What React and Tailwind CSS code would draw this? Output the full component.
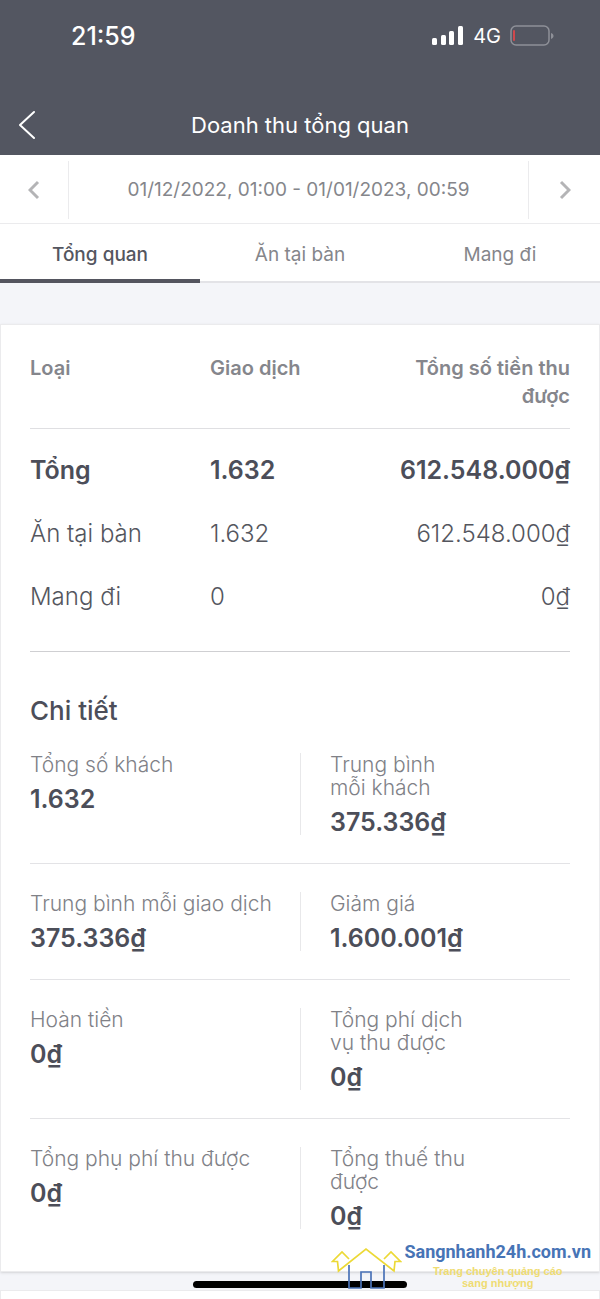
import { useState } from "react";

const tabs = ["Tổng quan", "Ăn tại bàn", "Mang đi"];

const rows = [
	{ type: "Tổng", count: "1.632", amount: "612.548.000₫", total: true },
	{ type: "Ăn tại bàn", count: "1.632", amount: "612.548.000₫" },
	{ type: "Mang đi", count: "0", amount: "0₫" },
];

const details = [
	[
		{ label: "Tổng số khách", value: "1.632" },
		{ label: "Trung bình mỗi khách", value: "375.336₫" },
	],
	[
		{ label: "Trung bình mỗi giao dịch", value: "375.336₫" },
		{ label: "Giảm giá", value: "1.600.001₫" },
	],
	[
		{ label: "Hoàn tiền", value: "0₫" },
		{ label: "Tổng phí dịch vụ thu được", value: "0₫" },
	],
	[
		{ label: "Tổng phụ phí thu được", value: "0₫" },
		{ label: "Tổng thuế thu được", value: "0₫" },
	],
];

function StatusBar() {
	return (
		<div className="flex h-[72px] items-center justify-between pl-[71px] pr-[46px] text-white">
			<span className="pt-[2px] text-[25px] font-medium">21:59</span>
			<div className="flex items-center gap-[9px]">
				<svg width="32" height="20" viewBox="0 0 32 20" fill="currentColor">
					<rect x="0" y="12" width="5" height="7" rx="1.5" />
					<rect x="9" y="9" width="5" height="10" rx="1.5" />
					<rect x="17" y="5" width="5" height="14" rx="1.5" />
					<rect x="26" y="0" width="5" height="19" rx="1.5" />
				</svg>
				<span className="text-[20px]">4G</span>
				<svg width="44" height="22" viewBox="0 0 44 22" fill="none">
					<rect x="1" y="1" width="38" height="19" rx="5" stroke="#8e9098" strokeWidth="1.5" />
					<path d="M41 8v6c1.500-.4 2.500-1.600 2.500-3s-1-2.600-2.500-3z" fill="#8e9098" />
					<rect x="3" y="5" width="2" height="11" rx="1" fill="#d0484c" />
				</svg>
			</div>
		</div>
	);
}

function DetailItem({ label, value, right }) {
	return (
		<div className={right ? "border-l border-[#e8e8ea] pl-[29px]" : ""}>
			<dt
				className={
					right
						? "max-w-[140px] text-[21px] leading-[23px] font-light text-[#808187]"
						: "whitespace-nowrap text-[21px] leading-[23px] font-light text-[#808187]"
				}
			>
				{label}
			</dt>
			<dd className="mt-[10px] text-[25px] leading-[26px] font-semibold text-[#4c4e59]">
				{value}
			</dd>
		</div>
	);
}

function Watermark() {
	return (
		<div className="absolute right-[9px] bottom-[10px] flex items-end gap-[2px]">
			<svg width="71" height="42" viewBox="0 0 71 42" fill="none" strokeWidth="1.7">
				<path
					d="M18 12l-7-7L1.500 14.500H6.500L7.500 24 35 2l28 22 1-9.500h5.500L60 5l-7 7"
					stroke="#ecd936"
				/>
				<path d="M18 18v23h12V25h10v16h13V18" stroke="#4a73b8" />
			</svg>
			<div className="flex flex-col items-center">
				<a
					href="#"
					className="font-['Roboto','Liberation_Sans',sans-serif] text-[18px] leading-[26px] font-bold text-[#4774b6]"
				>
					Sangnhanh24h.com.vn
				</a>
				<p className="text-center font-['Liberation_Sans',sans-serif] text-[11px] leading-[12px] font-bold text-[#efdc72]">
					Trang chuyên quảng cáo
					<br />
					sang nhượng
				</p>
			</div>
		</div>
	);
}

export default function App() {
	const [activeTab, setActiveTab] = useState(0);

	return (
		<div className="relative flex min-h-screen flex-col bg-[#f4f5f9] font-['Inter','Liberation_Sans',sans-serif]">
			{/* Header */}
			<header className="bg-[#535661] pb-[5px]">
				<StatusBar />
				<div className="grid grid-cols-[60px_1fr_60px] items-center pt-[28px]">
					<button type="button" aria-label="Quay lại" className="flex h-[50px] items-center pl-[19px] text-white">
						<svg width="18" height="30" viewBox="0 0 18 30" fill="none" stroke="currentColor" strokeWidth="2">
							<path d="M15 2L1 15l14 13" strokeLinecap="round" strokeLinejoin="round" />
						</svg>
					</button>
					<h1 className="text-center text-[22px] text-white">Doanh thu tổng quan</h1>
				</div>
			</header>

			{/* Date range */}
			<div className="flex h-[69px] items-stretch border-b border-[#ebebed] bg-white pt-[6px] pb-[4px]">
				<button
					type="button"
					aria-label="Trước"
					className="flex w-[69px] items-center justify-center border-r border-[#ebebed] text-[#b4b4b6]"
				>
					<svg width="12" height="20" viewBox="0 0 12 20" fill="none" stroke="currentColor" strokeWidth="3">
						<path d="M10 2L2 10l8 8" />
					</svg>
				</button>
				<button type="button" className="flex-1 text-[19px] text-[#85868b]">
					01/12/2022, 01:00 - 01/01/2023, 00:59
				</button>
				<button
					type="button"
					aria-label="Sau"
					className="flex w-[72px] items-center justify-center border-l border-[#ebebed] text-[#b4b4b6]"
				>
					<svg width="12" height="20" viewBox="0 0 12 20" fill="none" stroke="currentColor" strokeWidth="3">
						<path d="M2 2l8 8-8 8" />
					</svg>
				</button>
			</div>

			{/* Tabs */}
			<nav className="grid h-[59px] grid-cols-3 bg-white">
				{tabs.map((tab, i) => (
					<button
						key={tab}
						type="button"
						onClick={() => setActiveTab(i)}
						className={
							i === activeTab
								? "border-b-4 border-[#54555f] pt-[8px] text-[19px] font-medium text-[#54565f]"
								: "border-b-2 border-[#e3e3e7] pt-[6px] text-[19px] text-[#85868b]"
						}
					>
						{tab}
					</button>
				))}
			</nav>

			{/* Report card */}
			<main className="mt-[41px] border border-[#ebebed] bg-white px-[29px] pt-[29px] pb-[42px] shadow-sm">
				<table className="w-full table-fixed text-left">
					<thead>
						<tr className="border-b border-[#dfdfe2] align-top text-[20px] leading-[28px] text-[#85868c]">
							<th className="pb-[18px] font-semibold">Loại</th>
							<th className="pb-[18px] font-semibold">Giao dịch</th>
							<th className="pb-[18px] text-right font-semibold">Tổng số tiền thu được</th>
						</tr>
					</thead>
					<tbody className="before:block before:h-[10px]">
						{rows.map((row) => (
							<tr
								key={row.type}
								className={
									row.total
										? "h-[63px] text-[25px] font-semibold text-[#4c4e59]"
										: "h-[63px] text-[24px] font-light text-[#54565e]"
								}
							>
								<td>{row.type}</td>
								<td>{row.count}</td>
								<td className="text-right">{row.amount}</td>
							</tr>
						))}
					</tbody>
				</table>

				<section className="mt-[23px] border-t border-[#cfcfd2] pt-[41px]">
					<h2 className="text-[26px] leading-[36px] font-medium text-[#4c4e59]">Chi tiết</h2>
					<div className="mt-[24px]">
						{details.map(([left, right], i) => (
							<dl
								key={left.label}
								className={
									i === 0
										? "grid grid-cols-2"
										: "mt-[28px] grid grid-cols-2 border-t border-[#e3e3e6] pt-[28px]"
								}
							>
								<DetailItem {...left} />
								<DetailItem {...right} right />
							</dl>
						))}
					</div>
				</section>
			</main>

			{/* Top of the next card */}
			<div className="mt-[18px] min-h-[9px] flex-1 border border-b-0 border-[#ebebed] bg-white" />

			<div className="absolute bottom-[11px] left-1/2 h-[7px] w-[214px] -translate-x-1/2 rounded-full bg-black" />
			<Watermark />
		</div>
	);
}
